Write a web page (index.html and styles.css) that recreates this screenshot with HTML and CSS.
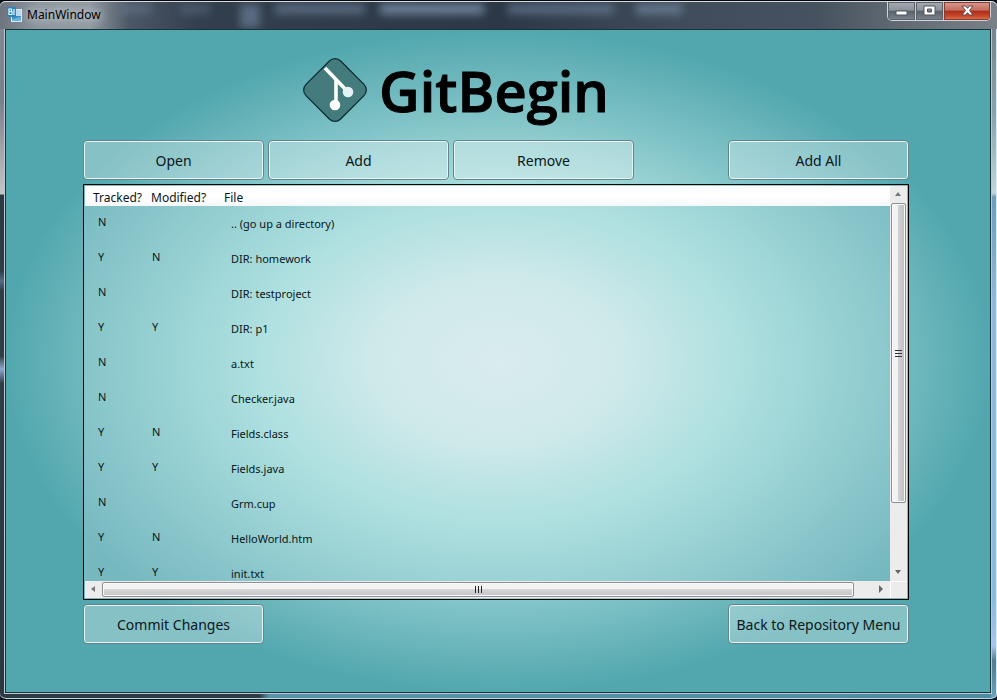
FILE: index.html
```
<!DOCTYPE html>
<html lang="en">
<head>
<meta charset="utf-8">
<title>MainWindow</title>
<link rel="stylesheet" href="styles.css">
</head>
<body>
<div class="window">
  <header class="titlebar">
    <div class="blur-tabs" aria-hidden="true"><i class="b1"></i><i class="b2"></i><i class="b3"></i><i class="b4"></i><i class="b5"></i><i class="b6"></i><i class="b7"></i></div>
    <svg class="app-icon" width="16" height="16" viewBox="0 0 16 16" aria-hidden="true">
      <rect x="4.500" y="2.500" width="10" height="12" fill="#b9d9ee" stroke="#dcecf6"/>
      <rect x="5" y="9" width="9" height="5" fill="#3f8cc4"/>
      <path d="M5 12l9-2v4H5z" fill="#67b2df"/>
      <rect x="0" y="0" width="9" height="10" fill="#2b86c0"/>
      <path d="M2 2h2.500v2.500H2zM2 4.500h3v3H2zM7 2v6" fill="none" stroke="#e9f6ff" stroke-width="1.200"/>
    </svg>
    <span class="title">MainWindow</span>
    <div class="controls">
      <button class="ctl" aria-label="Minimize"><svg width="13" height="11" viewBox="0 0 13 11"><rect x="1" y="6" width="11" height="4" fill="#fff" stroke="#50555c"/></svg></button>
      <button class="ctl" aria-label="Maximize"><svg width="13" height="11" viewBox="0 0 13 11"><path fill-rule="evenodd" d="M1 1h11v9H1zM4.500 4v3h4V4z" fill="#fff" stroke="#50555c"/></svg></button>
      <button class="ctl close" aria-label="Close"><svg width="13" height="11" viewBox="0 0 13 11"><path d="M1 1h3.500l2 2.300L8.500 1H12L8.500 5.500 12 10H8.500l-2-2.300L4.500 10H1l3.500-4.500z" fill="#fff" stroke="#66434a"/></svg></button>
    </div>
  </header>
  <main class="client">
    <h1 class="brand">
      <svg width="66" height="66" viewBox="0 0 66 66" aria-hidden="true">
        <rect x="8.500" y="8.500" width="49" height="49" rx="8" transform="rotate(45 33 33)" fill="#447c7e" stroke="#0b2a30" stroke-width="1.200"/>
        <path d="M23 11L46 35M34 22V48" stroke="#fff" stroke-width="3.600" fill="none"/>
        <circle cx="46" cy="35" r="5.300" fill="#e6f2f4"/>
        <circle cx="33" cy="48" r="5.300" fill="#fff"/>
      </svg>
      <span>GitBegin</span>
    </h1>
    <div class="bar top">
      <button class="btn">Open</button>
      <button class="btn">Add</button>
      <button class="btn">Remove</button>
      <button class="btn end">Add All</button>
    </div>
    <section class="list">
      <div class="view">
        <table>
          <colgroup><col class="c1"><col class="c2"><col></colgroup>
          <thead><tr><th>Tracked?</th><th>Modified?</th><th>File</th></tr></thead>
          <tbody>
            <tr><td>N</td><td></td><td>.. (go up a directory)</td></tr>
            <tr><td>Y</td><td>N</td><td>DIR: homework</td></tr>
            <tr><td>N</td><td></td><td>DIR: testproject</td></tr>
            <tr><td>Y</td><td>Y</td><td>DIR: p1</td></tr>
            <tr><td>N</td><td></td><td>a.txt</td></tr>
            <tr><td>N</td><td></td><td>Checker.java</td></tr>
            <tr><td>Y</td><td>N</td><td>Fields.class</td></tr>
            <tr><td>Y</td><td>Y</td><td>Fields.java</td></tr>
            <tr><td>N</td><td></td><td>Grm.cup</td></tr>
            <tr><td>Y</td><td>N</td><td>HelloWorld.htm</td></tr>
            <tr><td>Y</td><td>Y</td><td>init.txt</td></tr>
          </tbody>
        </table>
      </div>
      <div class="scroll vertical" aria-hidden="true">
        <svg class="arrow" viewBox="0 0 17 17"><path d="M5 10l3-4 3 4z" fill="#777"/></svg>
        <div class="thumb"><svg width="7" height="9" viewBox="0 0 7 9"><path d="M0 1.500h7M0 4.500h7M0 7.500h7" stroke="#333"/></svg></div>
        <svg class="arrow last" viewBox="0 0 17 17"><path d="M5 6l3 4 3-4z" fill="#666"/></svg>
      </div>
      <div class="scroll horizontal" aria-hidden="true">
        <svg class="arrow" viewBox="0 0 17 17"><path d="M10 5L6 8l4 3z" fill="#777"/></svg>
        <div class="thumb"><svg width="9" height="7" viewBox="0 0 9 7"><path d="M1.500 0v7M4.500 0v7M7.500 0v7" stroke="#222"/></svg></div>
        <svg class="arrow last" viewBox="0 0 17 17"><path d="M6 4l4 4-4 4z" fill="#666"/></svg>
      </div>
      <div class="corner"></div>
    </section>
    <div class="bar bottom">
      <button class="btn">Commit Changes</button>
      <button class="btn end">Back to Repository Menu</button>
    </div>
  </main>
</div>
</body>
</html>
```
FILE: styles.css
```
* { box-sizing: border-box; }
body {
  margin: 0;
  background: #0c1218;
  color: #0a1719;
  font-family: "Noto Sans", "Open Sans", sans-serif;
}
button { font-family: inherit; color: inherit; }
.window {
  display: flex;
  flex-direction: column;
  height: 100vh;
  padding: 0 6px 6px 5px;
  border-top: 1px solid #05070a;
  border-bottom: 1px solid #10181d;
  border-radius: 6px;
  box-shadow: inset 0 1px #d5dbe2, inset 0 -1px #b9d8e2, inset -1px 0 #d6edf4;
  background:
    linear-gradient(#858a93 0, #7a808a 100px, #c4c5c7 193px, #2c3944 194px, #303d49 270px, #566b86 280px, #303d49 290px, #303d45 355px, #8da9cf 368px, #303d49 382px, #2b3841 100%) left / 5px 100% no-repeat,
    linear-gradient(#747a80 0, #8da6b1 120px, #c3d5da 192px, #6f9dbb 196px, #8fb9d8 300px, #8dbbdc 600px, #a7c7eb 645px, #537c93 660px, #6ba2bd 100%) right / 6px 100% no-repeat,
    linear-gradient(90deg, #2e3b45 26%, #5893ab 27%, #4d8ba4 100%);
}
.titlebar {
  position: relative;
  flex: none;
  display: flex;
  align-items: flex-start;
  height: 28px;
  margin: 0 -6px 0 -5px;
  padding: 0 6px 0 7px;
  border-radius: 6px 6px 0 0;
  border-top: 1px solid #d5dbe2;
  overflow: hidden;
  background: linear-gradient(90deg, #6d747e 0, #8f979f 4%, #929aa2 9%, #4b5765 13%, #333f4c 20%, #2c3846 50%, #404c59 68%, #46525f 82%, #616a73 90%, #7a8087 100%);
}
.app-icon { margin-top: 5px; z-index: 1; }
.title {
  z-index: 1;
  margin: 4px 0 0 4px;
  font-size: 12px;
  line-height: 18px;
  color: #000;
  text-shadow: 0 0 8px #c8d0d6, 0 0 8px #c8d0d6;
}
.blur-tabs i {
  position: absolute;
  top: 2px;
  height: 10px;
  background: #7f96b4;
  opacity: .5;
  filter: blur(4px);
}
.blur-tabs .b1 { left: 120px; width: 32px; opacity: .3; }
.blur-tabs .b2 { left: 180px; width: 30px; opacity: .3; }
.blur-tabs .b3 { left: 240px; width: 20px; height: 24px; opacity: .5; }
.blur-tabs .b4 { left: 275px; width: 90px; }
.blur-tabs .b5 { left: 380px; width: 104px; opacity: .8; }
.blur-tabs .b6 { left: 508px; width: 106px; }
.blur-tabs .b7 { left: 636px; width: 46px; opacity: .6; }
.controls {
  display: flex;
  z-index: 1;
  margin-left: auto;
  border: 1px solid #d0d3d7;
  border-top: 0;
  border-radius: 0 0 5px 5px;
  overflow: hidden;
}
.ctl {
  display: grid;
  place-items: center;
  width: 28px;
  height: 18px;
  padding: 0 0 2px;
  border: 0;
  border-right: 1px solid #c7cbd0;
  box-shadow: inset 0 0 0 1px #5c636b;
  background: linear-gradient(#a6abb1 0, #8b9299 46%, #59616c 50%, #7b838c 100%);
}
.ctl.close {
  width: 46px;
  border-right: 0;
  box-shadow: inset 0 0 0 1px #843b33;
  background: linear-gradient(#d99c90 0, #c46c5d 46%, #ab2b18 50%, #c94c2f 80%, #dc7c55 100%);
}
.client {
  flex: 1;
  min-height: 0;
  display: flex;
  flex-direction: column;
  padding: 27px 81px 48px 77px;
  border: 1px solid #18333a;
  outline: 1px solid #bcc9cf;
  background: radial-gradient(closest-side ellipse, #d9ecef 0, #cfe9ea 25%, #afe0e0 49%, #52a7ae 100%);
}
.brand {
  flex: none;
  display: flex;
  align-items: center;
  justify-content: center;
  gap: 11px;
  height: 66px;
  margin: 0 81px 17px 0;
  color: #000;
  font: 600 56px/66px "Open Sans", sans-serif;
  -webkit-text-stroke: 1px #000;
}
.brand svg { -webkit-text-stroke: 0; }
.bar { flex: none; display: flex; gap: 4px; }
.btn {
  width: 181px;
  height: 40px;
  padding: 1px 0 0;
  border: 1px solid #66858a;
  border-radius: 4px;
  box-shadow: inset 0 0 0 1px #e4f3f4;
  background: #ffffff4d;
  font-size: 14px;
  line-height: 20px;
  white-space: nowrap;
}
.end { margin-left: auto; }
.list {
  flex: 1;
  min-height: 0;
  display: grid;
  grid-template: minmax(0, 1fr) 17px / minmax(0, 1fr) 17px;
  margin: 4px 0;
  padding: 1px;
  border: 1px solid #000;
  background: radial-gradient(farthest-corner ellipse at 50% 42%, #b0e1e100 30%, #b0e1e155 52%, #b4dbe158 75%, #b8d4de60 100%);
}
.view { overflow: hidden; }
table {
  width: 100%;
  table-layout: fixed;
  border-collapse: collapse;
  font-size: 11px;
  line-height: 16px;
}
.c1 { width: 58px; }
.c2 { width: 73px; }
th {
  height: 20px;
  padding: 4px 0 0 8px;
  background: linear-gradient(#fff 50%, #f5f7f9);
  font-size: 12px;
  font-weight: normal;
  text-align: left;
  white-space: nowrap;
}
td { height: 35px; padding: 0 0 4px 13px; }
td:nth-child(2) { padding-left: 9px; }
td:nth-child(3) { padding: 0 0 0 15px; }
.scroll { display: flex; background: #ececec; }
.scroll .arrow { flex: none; width: 17px; height: 17px; }
.scroll .last { margin-top: auto; margin-left: auto; }
.thumb {
  display: grid;
  place-items: center;
  border: 1px solid #8f8f93;
  border-radius: 2px;
  box-shadow: inset 0 0 0 1px #fafafa;
}
.vertical { flex-direction: column; }
.vertical .thumb {
  height: 76%;
  margin: 0 1px;
  background: linear-gradient(90deg, #f3f3f3 45%, #d2d2d5 50%, #bebec2);
}
.horizontal .thumb {
  flex: 0 1 752px;
  margin: 1px 0;
  background: linear-gradient(#f3f3f3 45%, #d5d5d8 50%, #c4c4c8);
}
.corner { background: #ececec; border: 1px solid #fff; border-width: 1px 0 0 1px; }
```
